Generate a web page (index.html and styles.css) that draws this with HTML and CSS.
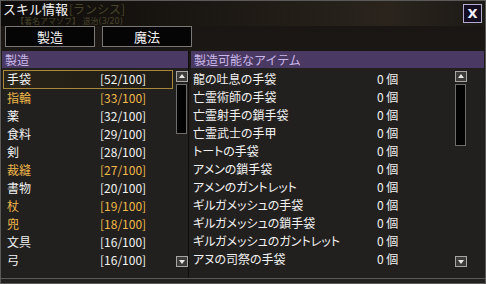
FILE: index.html
```html
<!DOCTYPE html>
<html lang="ja">
  <head>
    <meta charset="UTF-8" />
    <title>スキル情報</title>
    <link rel="stylesheet" href="styles.css">
  </head>
  <body>
    <div class="window">
      <div class="titlebar">
        <div class="title-line">
          <span class="title">スキル情報</span>
          <span class="ghost ghost-1">[ランシス]</span>
        </div>
        <div class="ghost ghost-2">【著名アマゾフ】 退治(3/20)</div>
        <button class="close">X</button>
      </div>

      <div class="tabs">
        <button class="tab">製造</button>
        <button class="tab">魔法</button>
      </div>

      <div class="panels">
        <div class="panel panel-left">
          <div class="panel-head">製造</div>
          <div class="panel-body">
            <ul class="list skills">
              <li class="selected"><span>手袋</span><span>[52/100]</span></li>
              <li class="gold"><span>指輪</span><span>[33/100]</span></li>
              <li><span>薬</span><span>[32/100]</span></li>
              <li><span>食料</span><span>[29/100]</span></li>
              <li><span>剣</span><span>[28/100]</span></li>
              <li class="gold"><span>裁縫</span><span>[27/100]</span></li>
              <li><span>書物</span><span>[20/100]</span></li>
              <li class="gold"><span>杖</span><span>[19/100]</span></li>
              <li class="gold"><span>兜</span><span>[18/100]</span></li>
              <li><span>文具</span><span>[16/100]</span></li>
              <li><span>弓</span><span>[16/100]</span></li>
            </ul>
            <div class="scrollbar short">
              <div class="arrow up"></div>
              <div class="track"></div>
              <div class="spacer"></div>
              <div class="arrow down"></div>
            </div>
          </div>
        </div>

        <div class="panel panel-right">
          <div class="panel-head">製造可能なアイテム</div>
          <div class="panel-body">
            <ul class="list items">
              <li><span>龍の吐息の手袋</span><span class="count">0 個</span></li>
              <li><span>亡霊術師の手袋</span><span class="count">0 個</span></li>
              <li><span>亡霊射手の鎖手袋</span><span class="count">0 個</span></li>
              <li><span>亡霊武士の手甲</span><span class="count">0 個</span></li>
              <li><span>トートの手袋</span><span class="count">0 個</span></li>
              <li><span>アメンの鎖手袋</span><span class="count">0 個</span></li>
              <li><span>アメンのガントレット</span><span class="count">0 個</span></li>
              <li><span>ギルガメッシュの手袋</span><span class="count">0 個</span></li>
              <li><span>ギルガメッシュの鎖手袋</span><span class="count">0 個</span></li>
              <li><span>ギルガメッシュのガントレット</span><span class="count">0 個</span></li>
              <li><span>アヌの司祭の手袋</span><span class="count">0 個</span></li>
            </ul>
            <div class="scrollbar long">
              <div class="arrow up"></div>
              <div class="track"></div>
              <div class="spacer"></div>
              <div class="arrow down"></div>
            </div>
          </div>
        </div>
      </div>
    </div>
  </body>
</html>
```

FILE: styles.css
```css
* {
  box-sizing: border-box;
  margin: 0;
  padding: 0;
}
body {
  width: 486px;
  height: 284px;
  overflow: hidden;
  background: #1a1714;
  font-family: "Noto Sans CJK JP", "Noto Sans", sans-serif;
  color: #f2f2f2;
}
.window {
  width: 486px;
  height: 284px;
  border: 1px solid #5c5a58;
  background: linear-gradient(180deg, #171412 0%, #1f1c19 40%, #23211f 100%);
  display: flex;
  flex-direction: column;
}
.titlebar {
  position: relative;
  height: 25px;
  background: linear-gradient(90deg, #0d0b09 0%, #1c1813 45%, #2a241d 80%, #1c1915 100%);
}
.title-line {
  display: flex;
  align-items: baseline;
  gap: 1px;
  height: 16px;
  padding-left: 2px;
  line-height: 16px;
  white-space: nowrap;
}
.title {
  font-size: 13px;
  color: #f4f4f4;
}
.ghost {
  color: #48442a;
  font-size: 12px;
  white-space: nowrap;
}
.ghost-2 {
  margin: 0 0 0 15px;
  width: 150px;
  font-family: "DejaVu Sans", "Noto Sans CJK JP", sans-serif;
  font-size: 8px;
  line-height: 9px;
}
.close {
  position: absolute;
  right: 3px;
  top: 3px;
  width: 19px;
  height: 19px;
  border: 1px solid #b4accc;
  background: #150d22;
  color: #f4f0ff;
  font-family: "DejaVu Sans", sans-serif;
  font-weight: bold;
  font-size: 13px;
  line-height: 16px;
  text-align: center;
}
.tabs {
  display: flex;
  gap: 7px;
  padding-left: 4px;
  height: 24px;
}
.tab {
  width: 90px;
  height: 21px;
  border: 1px solid #7a7876;
  background: #050505;
  color: #f4f4f4;
  font-family: "Noto Sans CJK JP", sans-serif;
  font-size: 13px;
  line-height: 18px;
}
.panels {
  display: flex;
  gap: 2px;
  padding-left: 1px;
  margin-top: 1px;
  height: 228px;
  border-bottom: 1px solid #5a5856;
}
.panel {
  display: flex;
  flex-direction: column;
}
.panel-left {
  width: 187px;
  border-right: 1px solid #0e0d0c;
}
.panel-right {
  flex: 1;
  margin-right: 1px;
}
.panel-head {
  height: 17px;
  background: #4a3962;
  color: #cbb8ea;
  font-size: 12px;
  line-height: 17px;
  padding-left: 3px;
}
.panel-body {
  flex: 1;
  display: flex;
  padding-top: 2px;
  background: #22201e;
}
.list {
  list-style: none;
  font-size: 12px;
}
.list li {
  height: 18px;
  line-height: 18px;
  display: grid;
  white-space: nowrap;
}
.skills {
  width: 172px;
  padding-left: 1px;
}
.skills li {
  grid-template-columns: 93px auto;
  padding-left: 3px;
  border: 1px solid transparent;
  line-height: 16px;
}
.skills li.selected {
  height: 19px;
  border-color: #a8893a;
  background: linear-gradient(90deg, #2a2418, #1f1c16);
}
.skills li.gold {
  color: #f0b84a;
}
.items {
  width: 264px;
  padding-left: 2px;
}
.items li {
  grid-template-columns: 184px auto;
  font-feature-settings: "palt";
}
.count {
  font-feature-settings: normal;
}
.scrollbar {
  width: 12px;
  display: flex;
  flex-direction: column;
  padding-top: 1px;
  padding-bottom: 11px;
}
.short {
  margin-left: 3px;
}
.arrow {
  width: 12px;
  height: 11px;
  border: 1px solid #a8a6a4;
  background: #3e3c3a;
  position: relative;
}
.arrow::after {
  content: "";
  position: absolute;
  left: 2px;
  border-left: 3px solid transparent;
  border-right: 3px solid transparent;
}
.up::after {
  top: 2px;
  border-bottom: 4px solid #e6e6e6;
}
.down::after {
  top: 3px;
  border-top: 4px solid #e6e6e6;
}
.track {
  margin-top: 2px;
  width: 11px;
  background: #030303;
  border: 1px solid #6e6c6a;
}
.short .track {
  height: 50px;
}
.long .track {
  height: 62px;
}
.spacer {
  flex: 1;
}
```
